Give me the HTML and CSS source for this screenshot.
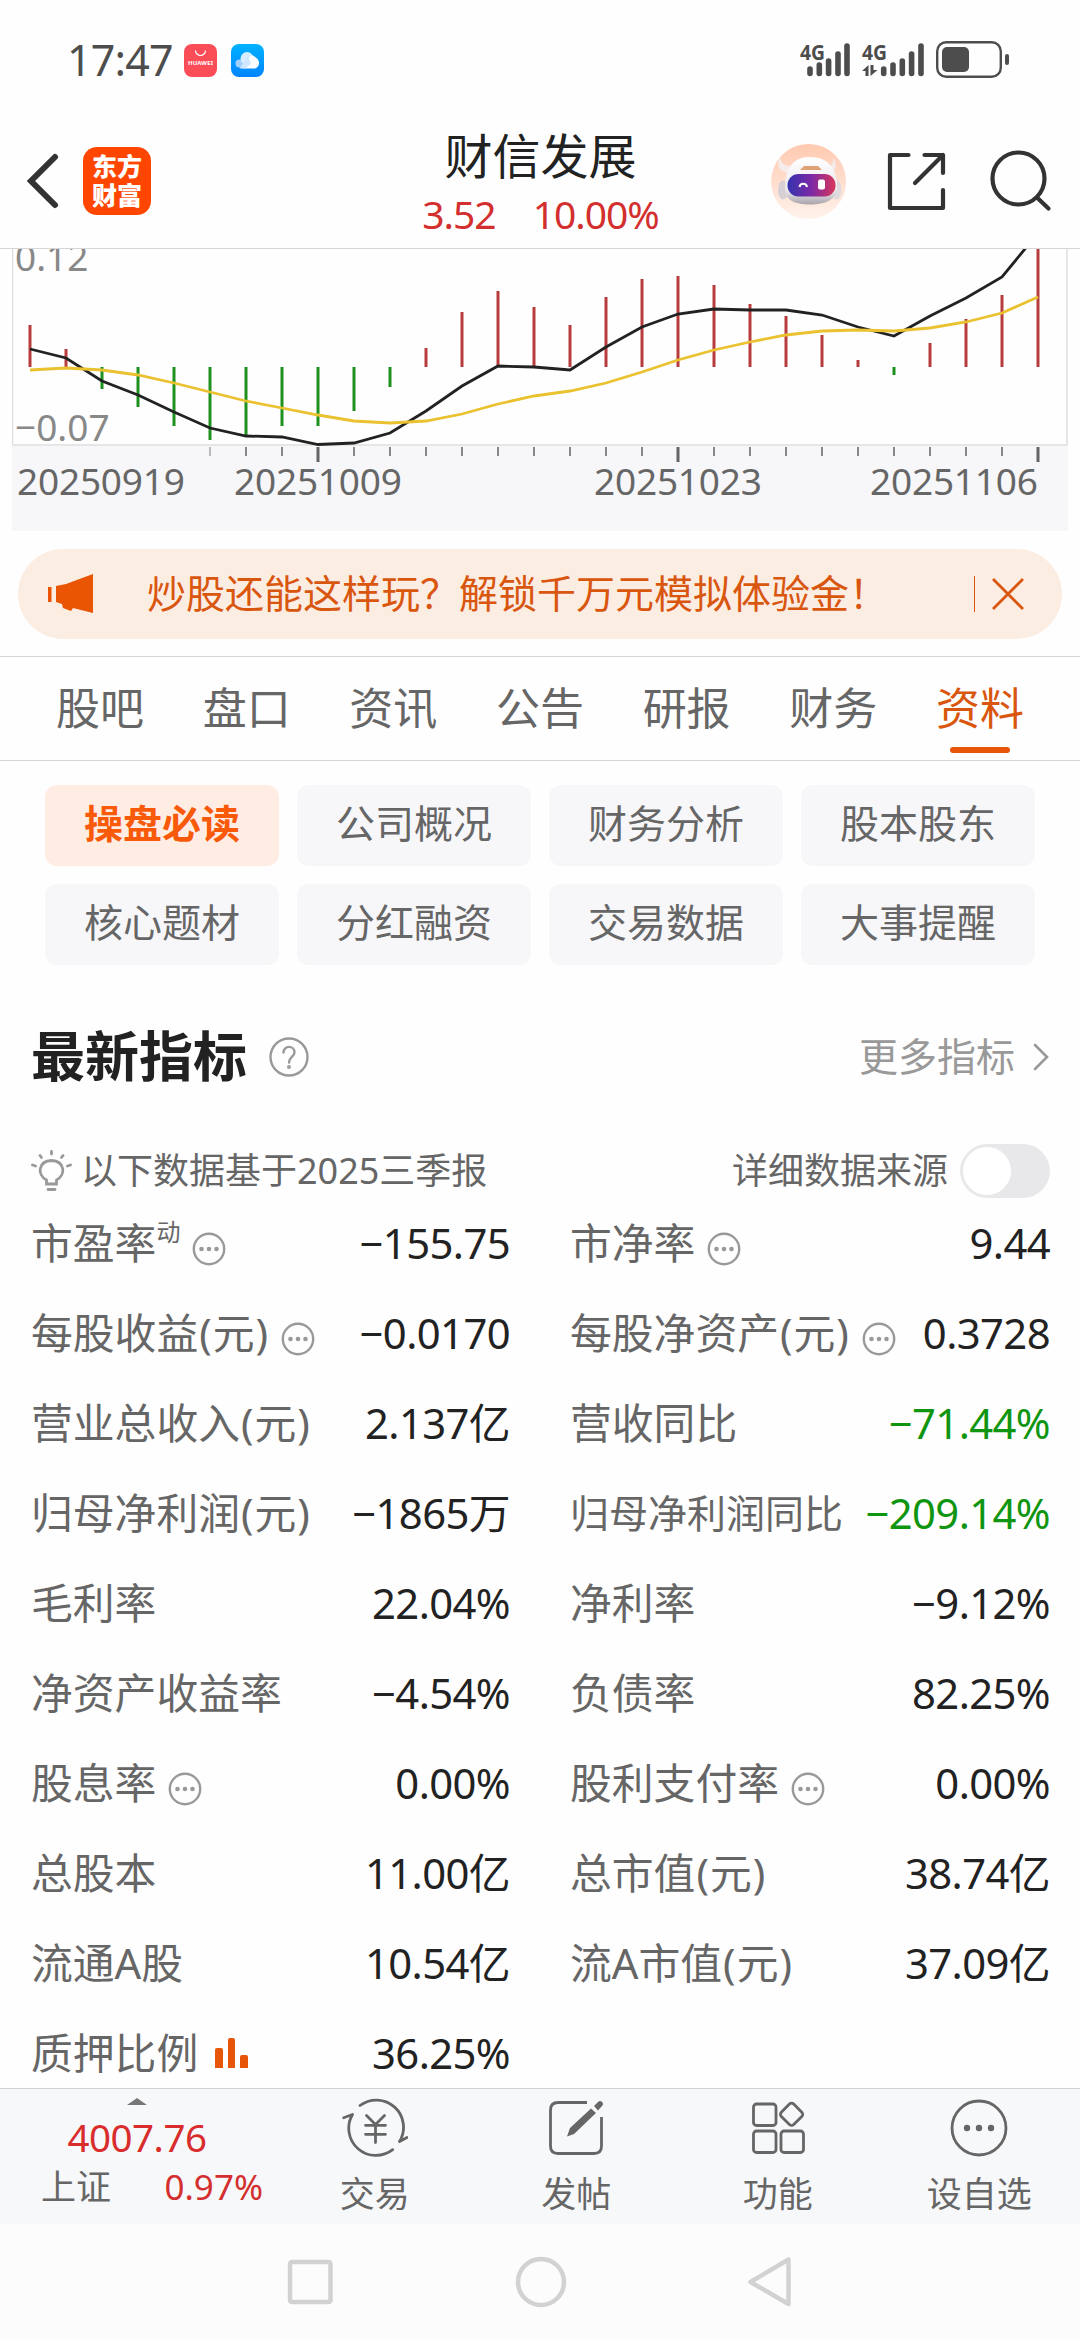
FILE: index.html
```
<!DOCTYPE html>
<html lang="zh-CN">
  <head>
    <meta charset="UTF-8" />
    <meta name="viewport" content="width=device-width, initial-scale=1.0" />
    <title>财信发展</title>
    <link rel="stylesheet" href="styles.css">
  </head>
  <body>
    <svg class="hidden">
      <symbol id="icon-more" viewBox="0 0 34 34">
        <circle cx="17" cy="17" r="15.2" fill="none" stroke="#999" stroke-width="2.4" />
        <g fill="#999"><circle cx="9.5" cy="17" r="2.3" /><circle cx="17" cy="17" r="2.3" /><circle cx="24.5" cy="17" r="2.3" /></g>
      </symbol>
    </svg>
    <div class="page">
      <div class="status-bar">
        <span class="s-time">17:47</span>
        <svg class="s-app" width="33" height="33" viewBox="0 0 33 33">
          <rect width="33" height="33" rx="8" fill="#fb4d58" />
          <path d="M11.5 6.5a5 5 0 0 0 10 0" fill="none" stroke="#fff" stroke-width="1.2" />
          <text x="16.5" y="21" font-size="6" font-weight="bold" fill="#fff" text-anchor="middle" textLength="25">HUAWEI</text>
        </svg>
        <svg class="s-app" width="33" height="33" viewBox="0 0 33 33">
          <defs><linearGradient id="cloud" x2="0" y2="1"><stop stop-color="#00b2ff" /><stop offset="1" stop-color="#0084ff" /></linearGradient></defs>
          <rect width="33" height="33" rx="8" fill="url(#cloud)" />
          <circle cx="8.5" cy="19.5" r="4" fill="#9fd0ff" />
          <circle cx="16" cy="14.5" r="6.5" fill="#d8eeff" />
          <path d="M12 24.500C16 21 16 12 22 11.500C25 13.500 28 15 28 19a5.300 5.300 0 0 1-5.300 5.500z" fill="#fff" />
          <path d="M8.500 24.500L17 12L20 20L14 24.500z" fill="#cfe8ff" />
        </svg>
        <svg class="s-signal" width="212" height="60" viewBox="798 30 212 60">
          <g fill="#4d4d4d" font-size="22" font-weight="bold">
            <text x="800" y="60" textLength="25" lengthAdjust="spacingAndGlyphs">4G</text>
            <text x="862" y="60" textLength="25" lengthAdjust="spacingAndGlyphs">4G</text>
          </g>
          <g stroke="#4d4d4d" stroke-width="5.600" stroke-linecap="round">
            <path d="M810 69V73.500M819.300 65V73.500M828.600 61V73.500M838 54V73.500M847 46V73.500" />
            <path d="M883.700 69V73.500M893 65V73.500M902.300 61V73.500M911.600 54V73.500M921 46V73.500" />
          </g>
          <path d="M862 71L868.500 65V76H865.500V71zM870.500 65H873.500V70H877.500L870.500 76z" fill="#4d4d4d" />
          <rect x="937.200" y="42.200" width="63.600" height="34.600" rx="9" fill="none" stroke="#4d4d4d" stroke-width="2.400" />
          <rect x="942" y="47" width="27" height="25" rx="5" fill="#4d4d4d" />
          <rect x="1005" y="54" width="4" height="11" rx="2" fill="#4d4d4d" />
        </svg>
      </div>

      <div class="header">
        <div class="h-left">
          <svg width="36" height="60" viewBox="0 0 36 60"><path d="M30 6L6 30L30 54" fill="none" stroke="#333" stroke-width="6" stroke-linecap="round" /></svg>
          <div class="h-logo">东方<br>财富</div>
        </div>
        <div class="h-title">
          <h1>财信发展</h1>
          <p><span>3.52</span><span>10.00%</span></p>
        </div>
        <svg class="h-icons" width="284" height="76" viewBox="770 143 284 76">
          <defs>
            <linearGradient id="robotBg" x2="0" y2="1"><stop stop-color="#ffc9b0" /><stop offset="1" stop-color="#fff2eb" /></linearGradient>
            <linearGradient id="visor"><stop stop-color="#3433b0" /><stop offset=".5" stop-color="#7d2aa4" /><stop offset="1" stop-color="#d9365a" /></linearGradient>
            <linearGradient id="helmet" x2="0" y2="1"><stop stop-color="#fff" /><stop offset=".7" stop-color="#ece8ec" /><stop offset="1" stop-color="#a9a3ac" /></linearGradient>
          </defs>
          <circle cx="808.600" cy="181.500" r="37.500" fill="url(#robotBg)" />
          <path d="M780 157C776 166 779 171 788 173L793 165C786 168 781 164 780 157zM833 157C838 166 836 171 829 173L824 165C831 168 834 164 833 157z" fill="#f5ebeb" />
          <ellipse cx="783" cy="190" rx="5" ry="9.500" fill="#d6cfd4" />
          <ellipse cx="836.500" cy="190" rx="5" ry="9.500" fill="#e0d9dd" />
          <path d="M810 157C829 157 837 170 837 187C837 200 825 204.500 810 204.500C794 204.500 785 200 785 188C785 170 792 157 810 157z" fill="url(#helmet)" />
          <path d="M800 170L804 166H818L822 170z" fill="#dfa277" />
          <rect x="787.500" y="174" width="48" height="22.500" rx="11" fill="url(#visor)" />
          <path d="M799.500 187a3.800 3.800 0 0 1 7.500 0" fill="none" stroke="#fff" stroke-width="2" />
          <rect x="818" y="179.500" width="7" height="10" rx="2" fill="#fff" />
          <g fill="none" stroke="#333" stroke-width="4.200" stroke-linecap="round" stroke-linejoin="round">
            <path d="M908.500 155H890V208H943V190M924.500 155H943V173M943 155L915 183" />
            <circle cx="1018.500" cy="178.500" r="26" />
            <path d="M1037.500 198L1048.500 208.500" />
          </g>
        </svg>
      </div>

      <svg class="chart" width="1056" height="282" viewBox="12 249 1056 282">
        <rect x="12" y="446" width="1056" height="85" fill="#f7f7fa" />
        <path d="M12.500 249V445H1067V249" fill="none" stroke="#dedede" stroke-width="1.500" />
        <g class="c-label"><text x="15" y="271">0.12</text><text x="15" y="441">−0.07</text></g>
        <path class="c-up" d="M30 325V367M66 349V367M426 348V367M462 312V367M498 291V367M534 307V367M570 325V367M606 297V367M642 279V367M678 276V367M714 285V367M750 304V367M786 316V367M822 335V367M858 360V367M930 343V367M966 319V367M1002 295V367M1038 248V367" />
        <path class="c-down" d="M102 367V389M138 367V407M174 367V426M210 367V440M246 367V437M282 367V426M318 367V426M354 367V411M390 367V387M894 367V375" />
        <polyline class="c-line" stroke="#222" points="30,349 66,358 102,381 138,395 174,412 210,428 246,436 282,437 318,444.500 354,443 390,433 426,411 462,386 498,366 534,367 570,370 606,347 642,327 678,314 714,309 750,310 786,310 822,315 858,327 894,336 930,316 966,298 1002,277 1038,233" />
        <polyline class="c-line" stroke="#eac12f" points="30,370 66,368 102,370 138,375 174,383 210,392 246,401 282,408 318,415 354,421 390,423 426,421 462,414 498,404 534,396 570,391 606,383 642,372 678,360 714,350 750,342 786,335 822,331 858,330 894,331 930,328 966,322 1002,313 1038,297" />
        <path d="M210 447V456" stroke="#bbb" stroke-width="2" />
        <path d="M246 447v9m36-9v9m72-9v9m36-9v9m36-9v9m36-9v9m36-9v9m36-9v9m36-9v9m36-9v9m36-9v9m72-9v9m36-9v9m36-9v9m36-9v9m36-9v9m36-9v9m36-9v9m36-9v9m36-9v9" stroke="#888" stroke-width="2" />
        <path d="M318 447v15m360-15v15m360-15v15" stroke="#666" stroke-width="3" />
        <g class="c-date">
          <text x="17" y="495">20250919</text><text x="234" y="495">20251009</text><text x="594" y="495">20251023</text><text x="870" y="495">20251106</text>
        </g>
      </svg>

      <div class="banner">
        <svg width="48" height="40" viewBox="0 0 48 40" fill="#ea5504"><path d="M0 13H3.500V28H0zM8 12L18 10L45 0V39L25 34L23 37L15 34L14 30L8 28z" /></svg>
        <span class="b-text">炒股还能这样玩？解锁千万元模拟体验金！</span>
        <i></i>
        <svg width="34" height="34" viewBox="0 0 34 34"><path d="M2 2L32 32M32 2L2 32" stroke="#d9560f" stroke-width="2.800" /></svg>
      </div>

      <div class="tabs">
        <span>股吧</span><span>盘口</span><span>资讯</span><span>公告</span><span>研报</span><span>财务</span><span class="active">资料</span>
      </div>

      <div class="sub-tabs">
        <span class="active">操盘必读</span><span>公司概况</span><span>财务分析</span><span>股本股东</span>
        <span>核心题材</span><span>分红融资</span><span>交易数据</span><span>大事提醒</span>
      </div>

      <div class="section-title">
        <h2>最新指标</h2>
        <svg width="40" height="40" viewBox="0 0 40 40" fill="none" stroke="#999" stroke-width="2.400"><circle cx="20" cy="20" r="18.500" /><path d="M14.500 15.500C14.500 8 25.500 8 25.500 15.500C25.500 19.500 20 20 20 25.500" stroke-linecap="round" /><circle cx="20" cy="30" r=".8" /></svg>
        <span class="s-more">更多指标</span>
        <svg width="16" height="28" viewBox="0 0 16 28"><path d="M2 2L14 14L2 26" fill="none" stroke="#999" stroke-width="2.600" stroke-linecap="round" /></svg>
      </div>

      <div class="tip">
        <svg width="42" height="44" viewBox="31 1149 42 44" fill="none" stroke="#999" stroke-width="2.800" stroke-linecap="round">
          <path d="M47.500 1184V1180C38 1175 39 1161 52.500 1160.500C66 1161 67 1175 57.500 1180V1184zM49 1189.500H56M52.500 1151.500V1154M41 1155.500L42.500 1157.500M64 1155.500L62.500 1157.500M33.500 1165L36.500 1166M71.500 1165L68.500 1166" />
        </svg>
        <span>以下数据基于2025三季报</span>
        <span class="t-source">详细数据来源</span>
        <div class="switch"></div>
      </div>

      <div class="data">
        <div><label>市盈率<sup>动</sup></label><svg class="more"><use href="#icon-more" /></svg><b>−155.75</b></div>
        <div><label>市净率</label><svg class="more"><use href="#icon-more" /></svg><b>9.44</b></div>
        <div><label>每股收益<u>(</u>元<u>)</u></label><svg class="more"><use href="#icon-more" /></svg><b>−0.0170</b></div>
        <div><label>每股净资产<u>(</u>元<u>)</u></label><svg class="more"><use href="#icon-more" /></svg><b>0.3728</b></div>
        <div><label>营业总收入<u>(</u>元<u>)</u></label><b>2.137亿</b></div>
        <div><label>营收同比</label><b class="down">−71.44%</b></div>
        <div><label>归母净利润<u>(</u>元<u>)</u></label><b>−1865万</b></div>
        <div><label class="small">归母净利润同比</label><b class="down">−209.14%</b></div>
        <div><label>毛利率</label><b>22.04%</b></div>
        <div><label>净利率</label><b>−9.12%</b></div>
        <div><label>净资产收益率</label><b>−4.54%</b></div>
        <div><label>负债率</label><b>82.25%</b></div>
        <div><label>股息率</label><svg class="more"><use href="#icon-more" /></svg><b>0.00%</b></div>
        <div><label>股利支付率</label><svg class="more"><use href="#icon-more" /></svg><b>0.00%</b></div>
        <div><label>总股本</label><b>11.00亿</b></div>
        <div><label>总市值<u>(</u>元<u>)</u></label><b>38.74亿</b></div>
        <div><label>流通A股</label><b>10.54亿</b></div>
        <div><label>流A市值<u>(</u>元<u>)</u></label><b>37.09亿</b></div>
        <div><label>质押比例</label><svg class="bars" width="34" height="30" viewBox="0 0 34 30" fill="#e65508"><path d="M0 30V12q0-2 2-2h4q2 0 2 2V30zM13 30V2q0-2 2-2h3q2 0 2 2V30zM25 30V19q0-2 2-2h4q2 0 2 2V30z" /></svg><b>36.25%</b></div>
      </div>

      <div class="footer">
        <div class="f-index">
          <i></i>
          <strong>4007.76</strong>
          <p><span>上证</span><em>0.97%</em></p>
        </div>
        <div class="f-item">
          <svg width="66" height="60" viewBox="342 2098 66 60" stroke-linecap="round" stroke-linejoin="round">
            <path d="M360 2105.500A27.200 27.200 0 0 1 399.500 2141.500L407 2137.500M343.700 2117.700L352.500 2114.500A27.200 27.200 0 0 0 392.700 2149.700" />
            <path d="M366.500 2115.500L375.500 2124.500L384.500 2115.500M365.500 2125.300H385.500M365.500 2134.300H385.500M375.500 2125V2142.500" />
          </svg>
          <span>交易</span>
        </div>
        <div class="f-item">
          <svg width="66" height="60" viewBox="544 2098 66 60">
            <path d="M588 2102.500H559Q551.500 2102.500 551.500 2110V2146Q551.500 2153.500 559 2153.500H595Q602.500 2153.500 602.500 2146V2117" />
            <path d="M568 2136.500L571 2128L592 2108.500L597 2113L575 2134zM595 2106L599 2102Q601 2100 603 2102Q605 2104 603 2106L599 2110.500z" fill="#666" stroke="none" />
          </svg>
          <span>发帖</span>
        </div>
        <div class="f-item">
          <svg width="66" height="60" viewBox="745 2098 66 60">
            <rect x="753.500" y="2104" width="22.500" height="21.500" rx="3" /><rect x="753.500" y="2131" width="22.500" height="21.500" rx="3" /><rect x="781" y="2131" width="22.500" height="21.500" rx="3" />
            <rect x="782.800" y="2105.500" width="17.500" height="17.500" rx="3" transform="rotate(45 791.500 2114.300)" />
          </svg>
          <span>功能</span>
        </div>
        <div class="f-item">
          <svg width="66" height="60" viewBox="946 2098 66 60">
            <circle cx="979" cy="2128" r="27" /><g fill="#666" stroke="none"><circle cx="967" cy="2128" r="3.200" /><circle cx="979" cy="2128" r="3.200" /><circle cx="991" cy="2128" r="3.200" /></g>
          </svg>
          <span>设自选</span>
        </div>
      </div>

      <div class="nav-bar">
        <svg width="506" height="52" viewBox="286 2256 506 52" fill="none" stroke="#d2d2d2" stroke-width="4.500" stroke-linejoin="round">
          <rect x="289" y="2262" width="40.500" height="40" rx="2" /><circle cx="540" cy="2282" r="23" /><path d="M749.500 2282L787.500 2259.500V2304z" />
        </svg>
      </div>
    </div>
  </body>
</html>
```
FILE: styles.css
```
* {
  margin: 0;
  padding: 0;
  box-sizing: border-box;
}
body {
  background-color: #fefefe;
  font-family: 'Noto Sans', 'Noto Sans CJK SC', sans-serif;
  color: #666;
}
svg {
  flex-shrink: 0;
}
.hidden {
  display: none;
}
i,
em {
  font-style: normal;
}
.page {
  display: flex;
  flex-direction: column;
  width: 1080px;
  height: 2340px;
  overflow: hidden;
}
.page > * {
  flex-shrink: 0;
}

/* 状态栏 */
.status-bar {
  display: flex;
  align-items: center;
  height: 120px;
  padding: 0 70px 0 67px;
}
.s-time {
  width: 117px;
  font-size: 43px;
  line-height: 60px;
  letter-spacing: -0.8px;
  color: #4d4d4d;
}
.s-app {
  margin-right: 14px;
}
.s-signal {
  margin-left: auto;
}

/* 头部 */
.header {
  display: grid;
  grid-template-columns: 360px 360px 360px;
  height: 129px;
  border-bottom: 1px solid #d6d6d6;
}
.h-left {
  display: flex;
  align-items: center;
  padding: 0 0 6px 25px;
}
.h-logo {
  width: 68px;
  height: 68px;
  margin-left: 22px;
  padding-top: 5px;
  border-radius: 14px;
  background-color: #ff4600;
  color: #fff;
  font-size: 25px;
  line-height: 29px;
  font-weight: 900;
  text-align: center;
}
.h-title {
  padding-left: 1px;
  text-align: center;
}
.h-title h1 {
  padding-top: 1px;
  font-size: 48px;
  line-height: 69px;
  font-weight: normal;
  color: #222;
}
.h-title p {
  display: flex;
  justify-content: center;
  gap: 37px;
  font-size: 39px;
  line-height: 48px;
  letter-spacing: -1px;
  color: #d32f2f;
}
.h-icons {
  margin: 23px 0 0 50px;
}

/* MACD 图 */
.chart {
  margin-left: 12px;
}
.c-label {
  font-size: 37px;
  fill: #888;
}
.c-date {
  font-size: 37px;
  letter-spacing: -0.2px;
  fill: #666;
}
.c-up,
.c-down {
  fill: none;
  stroke: #b83c3c;
  stroke-width: 3;
}
.c-down {
  stroke: #1f911f;
}
.c-line {
  fill: none;
  stroke-width: 2.8;
}

/* 广告条 */
.banner {
  display: flex;
  align-items: center;
  height: 90px;
  margin: 18px 18px 17px;
  padding: 0 37px 0 30px;
  border-radius: 45px;
  background-color: #fcede3;
  color: #d9560f;
}
.b-text {
  flex: 1;
  margin: -3px 0 0 51px;
  font-size: 39px;
  line-height: 60px;
}
.banner i {
  width: 1px;
  height: 36px;
  margin-right: 16px;
  background-color: #d9560f;
}

.tabs {
  display: flex;
  justify-content: space-between;
  height: 105px;
  padding: 0 56px;
  border-top: 1px solid #d6d6d6;
  border-bottom: 1px solid #d6d6d6;
  font-size: 44px;
  line-height: 103px;
}
.tabs .active {
  position: relative;
  color: #d9560f;
}
.tabs .active:after {
  content: '';
  position: absolute;
  left: 14px;
  right: 14px;
  bottom: 7px;
  height: 6px;
  border-radius: 3px;
  background-color: #e65508;
}

.sub-tabs {
  display: grid;
  grid-template-columns: repeat(4, 234px);
  gap: 18px;
  padding: 24px 45px 0;
}
.sub-tabs span {
  height: 81px;
  border-radius: 12px;
  background-color: #f7f7fa;
  font-size: 39px;
  line-height: 75px;
  text-align: center;
}
.sub-tabs .active {
  background-color: #ffede4;
  color: #f95a0a;
  font-weight: bold;
}

.section-title {
  display: flex;
  align-items: center;
  height: 80px;
  margin-top: 52px;
  padding: 0 31px;
}
.section-title h2 {
  width: 238px;
  margin-top: -3px;
  font-size: 54px;
  line-height: 80px;
  color: #222;
}
.s-more {
  margin: -3px 18px 0 auto;
  font-size: 39px;
  line-height: 80px;
  color: #999;
}

.tip {
  display: flex;
  align-items: center;
  height: 54px;
  margin-top: 47px;
  padding: 0 30px;
  font-size: 36px;
  line-height: 54px;
}
.tip span {
  margin-left: 9px;
}
.tip .t-source {
  margin: 0 12px 0 auto;
}
.switch {
  width: 90px;
  height: 54px;
  padding: 3px;
  border-radius: 27px;
  background-color: #e8e8eb;
}
.switch:before {
  content: '';
  display: block;
  width: 48px;
  height: 48px;
  border-radius: 50%;
  background-color: #fff;
}

/* 指标列表 */
.data {
  display: grid;
  grid-template-columns: 479px 480px;
  grid-auto-rows: 90px;
  column-gap: 60px;
  height: 890px;
  padding-left: 31px;
  overflow: hidden;
}
.data div {
  display: flex;
  align-items: center;
  font-size: 41.8px;
  line-height: 88px;
  white-space: nowrap;
}
.data sup {
  font-size: 24px;
  line-height: 0;
  vertical-align: 18px;
}
.data u {
  padding: 0 1px;
  text-decoration: none;
}
.data .small {
  font-size: 39px;
}
.data b {
  margin-left: auto;
  font-weight: normal;
  letter-spacing: -0.6px;
  color: #222;
}
.data .down {
  color: #109510;
}
.more {
  width: 34px;
  height: 34px;
  margin: 12px 0 0 12px;
}
.bars {
  margin-left: 17px;
}

/* 底部 */
.footer {
  display: flex;
  height: 136px;
  border-top: 1px solid #d0d2d4;
  background-color: #f7f8fa;
}
.f-index {
  display: flex;
  flex-direction: column;
  align-items: center;
  width: 274px;
  padding-top: 9px;
}
.f-index i {
  border: 10px solid transparent;
  border-top: 0;
  border-bottom: 7px solid #777;
}
.f-index strong {
  font-size: 38.5px;
  line-height: 64px;
  font-weight: normal;
  letter-spacing: -0.5px;
  color: #d92c2c;
}
.f-index p {
  display: flex;
  justify-content: space-between;
  width: 222px;
  margin-left: 30px;
  margin-top: -7px;
  font-size: 35px;
  line-height: 50px;
}
.f-index em {
  color: #d32f2f;
}
.f-item {
  display: flex;
  flex: 1;
  flex-direction: column;
  align-items: center;
  padding-top: 9px;
  font-size: 35px;
}
.f-item svg {
  fill: none;
  stroke: #666;
  stroke-width: 2.8;
}
.f-item span {
  line-height: 50px;
  margin-top: 11px;
}
.nav-bar {
  display: flex;
  justify-content: center;
  height: 116px;
  padding-top: 32px;
  background-color: #fcfcfc;
}
```
